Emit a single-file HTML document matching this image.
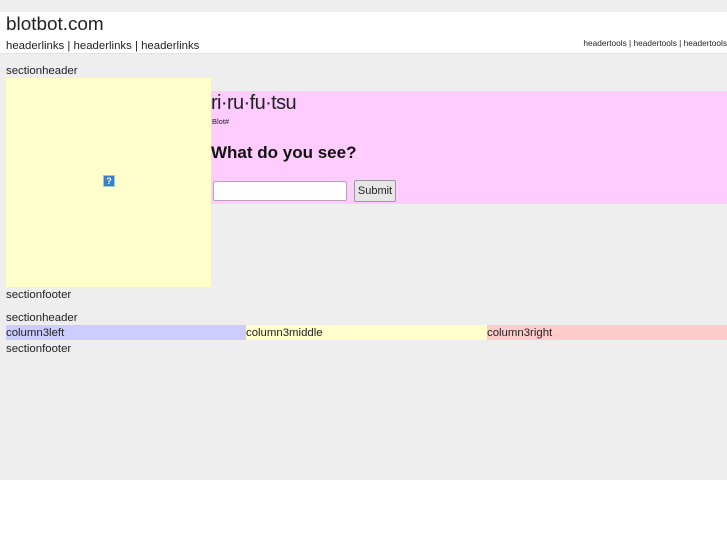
<!DOCTYPE html>
<html><head><style>
*{margin:0;padding:0;box-sizing:border-box}
html,body{width:727px;height:545px;background:#fff;font-family:"Liberation Sans",sans-serif;color:#222;overflow:hidden}
.bg{position:absolute;left:0;top:0;width:727px;height:480px;background:#eee}
.a{position:absolute;white-space:nowrap}
.t{font-size:11.4px;line-height:14px}
</style></head><body>
<div class="bg"></div>
<div class="a" style="left:0;top:12px;width:727px;height:42px;background:#fff;border-bottom:1px solid #e4e4e4"></div>
<div class="a" style="left:6px;top:14px;font-size:18.9px;line-height:22px">blotbot.com</div>
<div class="a t" style="left:6px;top:39px">headerlinks | headerlinks | headerlinks</div>
<div class="a" style="right:0;top:38px;font-size:8.3px;line-height:10px">headertools | headertools | headertools</div>
<div class="a t" style="left:6px;top:64px">sectionheader</div>
<div class="a" style="left:6px;top:78px;width:205px;height:209px;background:#ffffcc"></div>
<div class="a" style="left:103px;top:175px;width:12px;height:12px;background:#3a7fc8;border:1px solid #9cc;color:#fff;font-size:9px;line-height:10px;text-align:center;font-weight:bold">?</div>
<div class="a" style="left:211px;top:91px;width:516px;height:113px;background:#ffccff"></div>
<div class="a" style="left:211px;top:92px;font-size:20px;line-height:23px;letter-spacing:-0.6px">ri·ru·fu·tsu</div>
<div class="a" style="left:212px;top:117px;font-size:7.5px;line-height:9px">Blot#</div>
<div class="a" style="left:211px;top:143px;font-size:17px;line-height:20px;font-weight:bold;color:#111">What do you see?</div>
<div class="a" style="left:213px;top:181px;width:134px;height:20px;background:#fff;border:1px solid #b9a0b9;border-radius:2px"></div>
<div class="a" style="left:354px;top:180px;width:42px;height:22px;background:#e6e6e6;border:1px solid #999;border-radius:2px;font-size:11px;line-height:20px;text-align:center">Submit</div>
<div class="a t" style="left:6px;top:288px">sectionfooter</div>
<div class="a t" style="left:6px;top:311px">sectionheader</div>
<div class="a t" style="left:6px;top:325px;width:240px;height:15px;background:#ccccff;line-height:16px">column3left</div>
<div class="a t" style="left:246px;top:325px;width:241px;height:15px;background:#ffffcc;line-height:16px">column3middle</div>
<div class="a t" style="left:487px;top:325px;width:240px;height:15px;background:#ffcccc;line-height:16px">column3right</div>
<div class="a t" style="left:6px;top:342px">sectionfooter</div>
</body></html>
